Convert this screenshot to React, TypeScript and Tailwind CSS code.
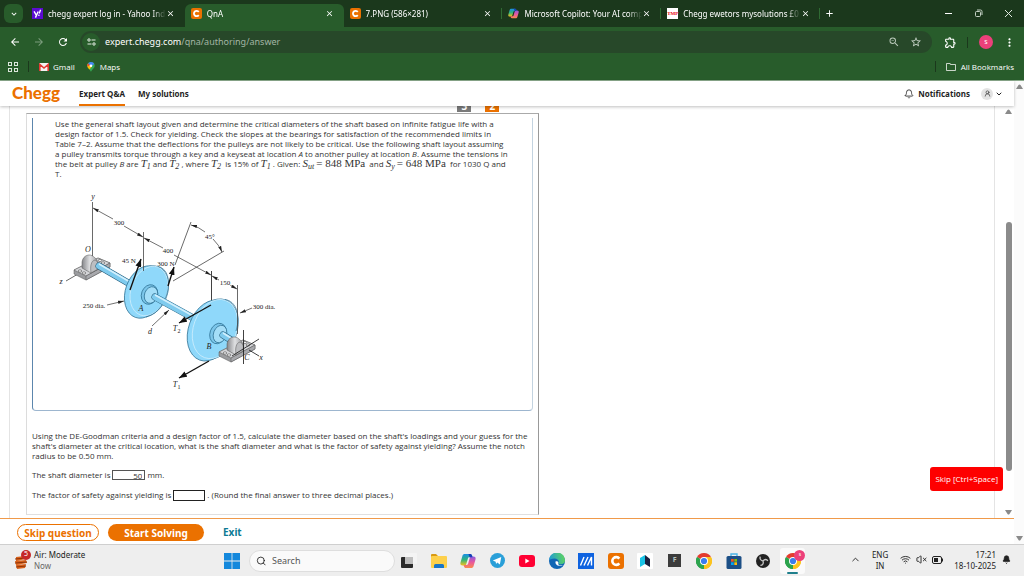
import type { ReactNode } from 'react'
import {
  MdArrowBack,
  MdArrowForward,
  MdClose,
  MdExpandMore,
  MdMoreVert,
  MdOutlineExtension,
  MdOutlineFolder,
  MdRefresh,
  MdStarBorder,
  MdZoomOut,
  MdAdd,
} from 'react-icons/md'
import { Bell, ChevronDown, ChevronUp, Search, UserRound, VolumeX, Wifi } from 'lucide-react'

function CheggIcon({ size }: { size: number }) {
  return (
    <svg width={size} height={size} viewBox="0 0 16 16" className="shrink-0">
      <rect width="16" height="16" rx="3" fill="#eb7100" />
      <path d="M11.3 5.6A3.9 3.9 0 1 0 11.3 10.4" fill="none" stroke="#fff" strokeWidth="2.6" />
    </svg>
  )
}

function CopilotIcon({ size }: { size: number }) {
  return (
    <svg width={size} height={size} viewBox="0 0 16 16" className="shrink-0">
      <defs>
        <linearGradient id="cpA" x1="0" y1="0" x2="0" y2="1">
          <stop offset="0" stopColor="#1b8fe6" />
          <stop offset="0.5" stopColor="#2fb57a" />
          <stop offset="1" stopColor="#f6c01c" />
        </linearGradient>
        <linearGradient id="cpB" x1="0" y1="0" x2="0" y2="1">
          <stop offset="0" stopColor="#8a5be0" />
          <stop offset="0.5" stopColor="#e9589c" />
          <stop offset="1" stopColor="#fb8a4e" />
        </linearGradient>
      </defs>
      <path d="M5 1h5.2c1 0 1.500.6 1.800 1.500l.5 1.700H9.400c-.8 0-1.300.5-1.500 1.200L6.300 11c-.3 1-.9 1.500-1.800 1.500H2.600C.8 12.500 0 11.200.5 9.400L2.400 3C2.800 1.600 3.600 1 5 1z" fill="url(#cpA)" />
      <path d="M11 15H5.800c-1 0-1.500-.6-1.800-1.500l-.4-1.500h3c.8 0 1.300-.5 1.500-1.200L9.700 5c.3-1 .9-1.500 1.800-1.500h1.900c1.800 0 2.600 1.300 2.100 3.100L13.600 13c-.4 1.400-1.200 2-2.600 2z" fill="url(#cpB)" />
      <path d="M8.500 1h1.700c1 0 1.500.6 1.800 1.500l.5 1.700H9.600z" fill="#1b3fb8" />
    </svg>
  )
}

function ChromeIcon({ size }: { size: number }) {
  return (
    <svg width={size} height={size} viewBox="0 0 16 16">
      <path d="M8 8L1.070 4A8 8 0 0 1 14.930 4z" fill="#e33b2e" />
      <path d="M8 8L14.930 4A8 8 0 0 1 8 16z" fill="#fcc31e" />
      <path d="M8 8L8 16A8 8 0 0 1 1.070 4z" fill="#2da44e" />
      <path d="M8 4h6.930A8 8 0 0 1 8 16l3.500-6z" fill="#fcc31e" />
      <path d="M1.070 4l3.500 6L8 12l0 4A8 8 0 0 1 1.070 4z" fill="#2da44e" />
      <circle cx="8" cy="8" r="4" fill="#fff" />
      <circle cx="8" cy="8" r="3.100" fill="#3b7ded" />
    </svg>
  )
}

const tabs: { title: string; icon: ReactNode; active?: boolean; divider?: boolean }[] = [
  {
    title: 'chegg expert log in - Yahoo Ind',
    icon: (
      <svg width="11" height="11" viewBox="0 0 16 16" className="shrink-0">
        <rect width="16" height="16" fill="#5b0bd0" />
        <path d="M3 5l3 5M9 5l-4 9M12.500 2.500l-2 5.500" stroke="#fff" strokeWidth="2" fill="none" />
        <circle cx="10" cy="10.600" r="1.200" fill="#fff" />
      </svg>
    ),
  },
  { title: 'QnA', icon: <CheggIcon size={11} />, active: true },
  { title: '7.PNG (586×281)', icon: <CheggIcon size={11} />, divider: true },
  { title: 'Microsoft Copilot: Your AI comp', icon: <CopilotIcon size={11} />, divider: true },
  {
    title: 'Chegg ewetors mysolutions £0',
    icon: (
      <span className="flex h-[11px] w-[11px] shrink-0 items-center justify-center bg-white font-['Liberation_Serif',serif] text-[5px] font-bold text-red-600">
        TMP
      </span>
    ),
    divider: true,
  },
]

function TabStrip() {
  return (
    <div className="flex h-[27px] shrink-0 items-center bg-[#1b381c] text-white">
      <button aria-label="Search tabs" className="ml-1 flex h-[19px] w-[19px] shrink-0 items-center justify-center rounded-md bg-[#285c2b]">
        <MdExpandMore size={10} />
      </button>
      <div className="ml-[3px] flex h-full min-w-0 max-w-[794px] flex-1">
        {tabs.map(tab => (
          <div
            key={tab.title}
            className={`flex min-w-0 flex-1 items-center pl-[6px] ${tab.active ? 'mt-1 rounded-t-md bg-[#285c2b] pb-1' : ''}`}
          >
            {tab.icon}
            <span className="ml-[5px] min-w-0 flex-1 overflow-hidden whitespace-nowrap text-[8px] [mask-image:linear-gradient(to_right,black_88%,transparent)]">
              {tab.title}
            </span>
            <button aria-label={`Close ${tab.title}`} className="mr-[9px] shrink-0">
              <MdClose size={9} />
            </button>
            <span className={`h-[11px] w-px shrink-0 ${tab.divider ? 'bg-[#2f6a33]' : ''}`} />
          </div>
        ))}
      </div>
      <button aria-label="New tab" className="ml-1">
        <MdAdd size={11} />
      </button>
      <div className="ml-auto flex shrink-0 items-center gap-[21px] pr-[11px]">
        <button aria-label="Minimize">
          <svg width="9" height="9" viewBox="0 0 9 9"><path d="M1 4.500h7" stroke="#fff" /></svg>
        </button>
        <button aria-label="Restore">
          <svg width="9" height="9" viewBox="0 0 9 9" fill="none" stroke="#c6d2c6">
            <rect x="1.500" y="2.500" width="5" height="5" rx="1" />
            <path d="M3 1h3.500a1.500 1.500 0 0 1 1.500 1.500V6" />
          </svg>
        </button>
        <button aria-label="Close window">
          <svg width="9" height="9" viewBox="0 0 9 9"><path d="M1 1l7 7M8 1l-7 7" stroke="#dfe8df" /></svg>
        </button>
      </div>
    </div>
  )
}

function Toolbar() {
  return (
    <div className="flex h-[30px] shrink-0 items-center bg-[#285c2b] pl-[9px] pr-2 text-white">
      <button aria-label="Back"><MdArrowBack size={12} /></button>
      <button aria-label="Forward" className="ml-3 text-[#7b9c7c]"><MdArrowForward size={12} /></button>
      <button aria-label="Reload" className="ml-3"><MdRefresh size={12} /></button>
      <div className="ml-[11px] flex h-[22px] flex-1 items-center rounded-full bg-[#274829] px-[2px]">
        <button aria-label="Site information" className="flex h-[18px] w-[18px] items-center justify-center rounded-full bg-[#285c2b]">
          <svg width="9" height="8" viewBox="0 0 9 8" fill="none" stroke="#e6eee6">
            <circle cx="2" cy="2" r="1.200" />
            <path d="M4.500 2H8.500M0.500 6H4.500" />
            <circle cx="7" cy="6" r="1.200" />
          </svg>
        </button>
        <div role="textbox" aria-label="Address" className="ml-[5px] flex-1 text-[9px] leading-3 text-[#a3b5a4]">
          <span className="text-white">expert.chegg.com</span>/qna/authoring/answer
        </div>
        <button aria-label="Zoom" className="text-[#b9c8b9]"><MdZoomOut size={12} /></button>
        <button aria-label="Bookmark this tab" className="ml-[10px] mr-2 text-[#c9d5c9]"><MdStarBorder size={12} /></button>
      </div>
      <button aria-label="Extensions" className="ml-3"><MdOutlineExtension size={13} /></button>
      <span className="ml-[10px] h-[11px] w-px bg-[#1b381c]" />
      <button aria-label="Profile" className="ml-[11px] flex h-[14px] w-[14px] items-center justify-center rounded-full bg-[#ec407a] text-[7px]">
        s
      </button>
      <button aria-label="Menu" className="ml-[10px]"><MdMoreVert size={13} /></button>
    </div>
  )
}

function BookmarksBar() {
  return (
    <div className="flex h-[24px] shrink-0 items-center border-b border-[#8aa98b] bg-[#285c2b] pb-[4px] pl-2 pr-[10px] font-['Open_Sans',sans-serif] text-[8px] leading-3 text-white">
      <button aria-label="Apps">
        <svg width="10" height="10" viewBox="0 0 10 10" fill="none" stroke="#dbe6db">
          <rect x="0.500" y="0.500" width="3" height="3" />
          <rect x="6.500" y="0.500" width="3" height="3" />
          <rect x="0.500" y="6.500" width="3" height="3" />
          <rect x="6.500" y="6.500" width="3" height="3" />
        </svg>
      </button>
      <span className="ml-[10px] h-[11px] w-px bg-[#1b381c]" />
      <a href="#gmail" className="ml-[10px] flex items-center gap-1">
        <svg width="10" height="8" viewBox="0 0 10 8">
          <rect width="10" height="8" rx="1" fill="#f3f3f3" />
          <path d="M0.800 8V1.500L5 5L9.200 1.500V8" fill="none" stroke="#e23a32" strokeWidth="1.600" />
        </svg>
        Gmail
      </a>
      <a href="#maps" className="ml-3 flex items-center gap-[5px]">
        <svg width="8" height="10" viewBox="0 0 8 10">
          <path d="M4 10C3.600 7.500 0.300 6.500 0.300 3.700A3.700 3.700 0 0 1 7.700 3.700C7.700 6.500 4.400 7.500 4 10z" fill="#34a853" />
          <path d="M0.900 5.700A3.700 3.700 0 0 1 1.200 1.200L5 4.500L2.500 7.600z" fill="#fbbc04" />
          <path d="M1.200 1.200L3.200 3L0.400 4.500A3.700 3.700 0 0 1 1.200 1.200z" fill="#ea4335" />
          <path d="M1.200 1.200A3.700 3.700 0 0 1 7.200 1.900L4 4.500z" fill="#4285f4" />
          <circle cx="4" cy="3.700" r="1.300" fill="#fff" />
        </svg>
        Maps
      </a>
      <span className="ml-auto h-[11px] w-px bg-[#1b381c]" />
      <button className="ml-[9px] flex items-center gap-1">
        <MdOutlineFolder size={12} className="text-[#c9d5c9]" />
        All Bookmarks
      </button>
    </div>
  )
}

function SiteHeader() {
  return (
    <header className="relative z-10 flex h-[25px] shrink-0 items-stretch bg-white pl-3 pr-[11px] text-[8px] font-bold text-[#1f1f1f] shadow-[0_1px_3px_rgba(0,0,0,0.25)]">
      <a href="#home" className="font-[Lato,sans-serif] text-[17px] font-black leading-6 text-[#eb7100]">
        Chegg
      </a>
      <nav className="ml-[19px] flex gap-[13px]">
        <a href="#qna" className="flex items-center border-b-2 border-[#eb7100] pt-[2px]">Expert Q&amp;A</a>
        <a href="#solutions" className="flex items-center">My solutions</a>
      </nav>
      <button className="ml-auto flex items-center gap-1">
        <Bell size={10} strokeWidth={2} />
        Notifications
      </button>
      <button aria-label="Account" className="ml-[11px] flex items-center gap-[2px]">
        <span className="flex h-3 w-3 items-center justify-center rounded-full bg-[#e3e3e3]">
          <UserRound size={7} />
        </span>
        <ChevronDown size={8} strokeWidth={3} />
      </button>
    </header>
  )
}

function Bearing() {
  return (
    <g stroke="#555" strokeWidth="0.500">
      <path d="M0 11L0 15L12 21L36 8L36 4L24 -1L20 1z" fill="#9b9c9f" />
      <path d="M0 11L12 17L36 4L24 -1z" fill="#d4d5d8" />
      <path d="M12 17L12 21L36 8L36 4z" fill="#a8a9ad" />
      <path d="M8 9L8 3C9 -4 16 -6 20 -2C23 0 24 3 24 7L24 10L17 14z" fill="url(#steel)" />
      <path d="M17 14C16 7 17 2 21 1C24 2 25 6 24 10z" fill="#bdbec1" />
      <g fill="#f0f0f0" stroke="#333">
        <ellipse cx="6" cy="12" rx="1.700" ry="1.200" />
        <ellipse cx="10" cy="14" rx="1.700" ry="1.200" />
        <ellipse cx="26" cy="1.500" rx="1.700" ry="1.200" />
        <ellipse cx="29" cy="4" rx="1.700" ry="1.200" />
      </g>
    </g>
  )
}

function ShaftFigure() {
  return (
    <svg width="225" height="205" viewBox="55 190 225 205" role="img" aria-label="Shaft with two pulleys">
      <defs>
        <marker id="dim" viewBox="0 0 6 4" refX="6" refY="2" markerWidth="6" markerHeight="4" markerUnits="userSpaceOnUse" orient="auto-start-reverse">
          <path d="M0 0.400L6 2L0 3.600z" fill="#222" />
        </marker>
        <marker id="force" viewBox="0 0 8 6" refX="8" refY="3" markerWidth="8" markerHeight="6" markerUnits="userSpaceOnUse" orient="auto">
          <path d="M0 0L8 3L0 6z" fill="#111" />
        </marker>
        <linearGradient id="steel" x1="0" y1="0" x2="1" y2="0">
          <stop offset="0" stopColor="#86878b" />
          <stop offset="0.500" stopColor="#e0e1e3" />
          <stop offset="1" stopColor="#98999d" />
        </linearGradient>
      </defs>

      {/* axes and extension lines */}
      <g stroke="#444" strokeWidth="0.800" fill="none">
        <path d="M92.500 203V258M66 282L78 275" />
        <path d="M191 223L175 266M224 252L173 282" />
        <path d="M211.500 272V305" stroke="#111" />
      </g>

      {/* left bearing, shaft, pulley A */}
      <g transform="translate(74 260)"><Bearing /></g>
      <path d="M99 267L130 285" stroke="#245a78" strokeWidth="7" strokeLinecap="round" />
      <path d="M99 267L130 285" stroke="#7fcbee" strokeWidth="6" strokeLinecap="round" />
      <path d="M99 265L130 283" stroke="#d3f0fd" strokeWidth="1.500" />
      <g stroke="#2a6d90" strokeWidth="0.700">
        <ellipse cx="149" cy="292" rx="18.500" ry="26" transform="rotate(20 149 292)" fill="#8fd8fa" />
        <ellipse cx="144.500" cy="293" rx="19" ry="27" transform="rotate(20 144.500 293)" fill="#8fd8fa" />
        <ellipse cx="149" cy="292" rx="18" ry="25.500" transform="rotate(20 149 292)" fill="#8fd8fa" stroke="#d3f0fd" />
        <path d="M158 267.500C167 269 171 281 167 295C163 308 155 316 146 318" fill="none" />
        <ellipse cx="149.500" cy="295.500" rx="8" ry="10" transform="rotate(20 149.500 295.500)" fill="#7cc6ea" />
        <ellipse cx="151" cy="296" rx="6.500" ry="8.500" transform="rotate(20 151 296)" fill="#a4def8" />
      </g>
      <path d="M155 298L206 326" stroke="#245a78" strokeWidth="7" strokeLinecap="round" />
      <path d="M155 298L206 326" stroke="#7fcbee" strokeWidth="6" strokeLinecap="round" />
      <path d="M155 296L206 324" stroke="#d3f0fd" strokeWidth="1.500" />

      {/* pulley B and right bearing */}
      <g stroke="#2a6d90" strokeWidth="0.700">
        <ellipse cx="215" cy="330" rx="22" ry="31" transform="rotate(20 215 330)" fill="#8fd8fa" />
        <ellipse cx="210.500" cy="331.500" rx="22" ry="31.500" transform="rotate(20 210.500 331.500)" fill="#8fd8fa" />
        <ellipse cx="215" cy="330" rx="21.500" ry="30.500" transform="rotate(20 215 330)" fill="#8fd8fa" stroke="#d3f0fd" />
        <path d="M225 300.500C236 302 241 316 236 332" fill="none" />
        <ellipse cx="218" cy="334.500" rx="8" ry="10.500" transform="rotate(20 218 334.500)" fill="#7cc6ea" />
        <ellipse cx="220" cy="335" rx="6.500" ry="9" transform="rotate(20 220 335)" fill="#a4def8" />
      </g>
      <path d="M223 336L231 341" stroke="#245a78" strokeWidth="7" strokeLinecap="round" />
      <path d="M223 336L231 341" stroke="#7fcbee" strokeWidth="6" strokeLinecap="round" />
      <path d="M223 334L231 339" stroke="#d3f0fd" strokeWidth="1.500" />
      <g transform="translate(219 342)"><Bearing /></g>

      <g stroke="#444" strokeWidth="0.800" fill="none">
        <path d="M143.500 233V272M237.500 286V335" />
        <path d="M243.500 331V365M232 357L259 340M249 351L259 357" stroke="#111" />
      </g>

      {/* dimensions */}
      <g stroke="#333" strokeWidth="0.700" fill="none">
        <path d="M113 220L93 209" markerEnd="url(#dim)" />
        <path d="M124 227L143 238" markerEnd="url(#dim)" />
        <path d="M163 249L144 239" markerEnd="url(#dim)" />
        <path d="M174 256L211 276" markerEnd="url(#dim)" />
        <path d="M219 281L212 277" markerEnd="url(#dim)" />
        <path d="M230 286L237 290" markerEnd="url(#dim)" />
        <path d="M205 233Q199 228 191 226" markerEnd="url(#dim)" />
        <path d="M213 240Q219 246 222 253" markerEnd="url(#dim)" />
        <path d="M107 306L124 302" markerEnd="url(#dim)" />
        <path d="M152 327L169 311" markerEnd="url(#dim)" />
        <path d="M252 309L240 314" markerEnd="url(#dim)" />
      </g>

      {/* forces */}
      <g stroke="#111" strokeWidth="1.400" fill="none">
        <path d="M130 291L141 260" markerEnd="url(#force)" />
        <path d="M168 287L174 268" markerEnd="url(#force)" />
        <path d="M211 306L179 324" markerEnd="url(#force)" />
        <path d="M209 362L179 379" markerEnd="url(#force)" />
      </g>

      <g className="font-['Liberation_Serif',serif] text-[7px]" fill="#222" textAnchor="middle">
        <g stroke="#fff" strokeWidth="2" paintOrder="stroke">
          <text x="119" y="226">300</text>
          <text x="168" y="254">400</text>
          <text x="225" y="286">150</text>
        </g>
        <text x="210" y="240">45°</text>
        <text x="129" y="264">45 N</text>
        <text x="166" y="267">300 N</text>
        <text x="94" y="309">250 dia.</text>
        <text x="264" y="310">300 dia.</text>
        <g fontStyle="italic" className="text-[8px]">
          <text x="93" y="200">y</text>
          <text x="88" y="253">O</text>
          <text x="61" y="285">z</text>
          <text x="141" y="312">A</text>
          <text x="150" y="335">d</text>
          <text x="209" y="350">B</text>
          <text x="247" y="361">C</text>
          <text x="261" y="361">x</text>
          <text x="175" y="332">T</text>
          <text x="175" y="388">T</text>
        </g>
        <text x="179" y="334" className="text-[6px]">2</text>
        <text x="179" y="390" className="text-[6px]">1</text>
      </g>
    </svg>
  )
}

function Sym({ name, sub }: { name: string; sub: string }) {
  return (
    <span className="font-['Liberation_Serif',serif] text-[11px] italic leading-[8px]">
      {name}
      <sub className="text-[8px]">{sub}</sub>
    </span>
  )
}

function Val({ children }: { children: ReactNode }) {
  return <span className="font-['Liberation_Serif',serif] text-[11px] leading-[8px]">{children}</span>
}

function ScrollArrow({ up }: { up?: boolean }) {
  return (
    <svg width="7" height="5" viewBox="0 0 7 5">
      <path d={up ? 'M0 5L2.500 1Q3.500 0 4.500 1L7 5z' : 'M0 0L2.500 4Q3.500 5 4.500 4L7 0z'} fill="#8a8a8a" />
    </svg>
  )
}

function Question() {
  return (
    <main className="relative flex min-h-0 flex-1 pl-[9px]">
      <div className="min-w-0 flex-1 overflow-hidden border-x border-[#e4e4e4] pl-4">
        <div className="flex h-[7px] w-[52%] items-start justify-end gap-[14px] pr-[30px] text-[10px] font-bold text-white">
          <span className="flex h-[6px] w-[14px] items-end justify-center overflow-hidden bg-[#7a7a7a] pb-[2px] leading-[8px]">3</span>
          <span className="flex h-[6px] w-[14px] items-end justify-center overflow-hidden bg-[#eb7100] pb-[2px] leading-[8px]">2</span>
        </div>
        <div className="w-[53%] whitespace-nowrap border border-b-[#e0e0e0] border-l-[#dcdcdc] border-r-[#999] border-t-[#aaa] px-[5px] pb-[14px] pt-1 font-['Open_Sans',sans-serif] text-[8px] leading-[10px] text-[#333]">
          <section className="h-[293px] rounded-b border border-t-0 border-b-[#9db6cf] border-l-[#5c86ad] border-r-[#c3d3e0] pl-[22px] pt-px">
            <p>
              Use the general shaft layout given and determine the critical diameters of the shaft based on infinite fatigue life with a<br />
              design factor of 1.5. Check for yielding. Check the slopes at the bearings for satisfaction of the recommended limits in<br />
              Table 7–2. Assume that the deflections for the pulleys are not likely to be critical. Use the following shaft layout assuming<br />
              a pulley transmits torque through a key and a keyseat at location <i>A</i> to another pulley at location <i>B</i>. Assume the tensions in<br />
              the belt at pulley <i>B</i> are <Sym name="T" sub="1" /> and <Sym name="T" sub="2" /> , where <Sym name="T" sub="2" />{' '}
              &nbsp;is 15% of <Sym name="T" sub="1" /> . Given: <Sym name="S" sub="ut" /> <Val>= 848 MPa</Val> &nbsp;and{' '}
              <Sym name="S" sub="y" /> <Val>= 648 MPa</Val> &nbsp;for 1030 Q and<br />
              T.
            </p>
            <div className="mt-[10px]"><ShaftFigure /></div>
          </section>
          <p className="mt-5">
            Using the DE-Goodman criteria and a design factor of 1.5, calculate the diameter based on the shaft's loadings and your guess for the<br />
            shaft's diameter at the critical location, what is the shaft diameter and what is the factor of safety against yielding? Assume the notch<br />
            radius to be 0.50 mm.
          </p>
          <div className="mt-[9px] flex h-[10px] items-center gap-[2px]">
            <label htmlFor="diameter">The shaft diameter is</label>
            <input id="diameter" defaultValue="50" className="h-[10px] w-[33px] border border-[#555] px-[2px] text-right text-[8px] leading-none" />
            mm.
          </div>
          <div className="mt-[10px] flex h-[10px] items-center gap-[2px]">
            <label htmlFor="safety">The factor of safety against yielding is</label>
            <input id="safety" className="h-[11px] w-8 border border-[#222] px-[2px] text-right text-[8px] leading-none" />
            . (Round the final answer to three decimal places.)
          </div>
        </div>
      </div>
      <div className="flex w-[19px] flex-col items-center bg-white py-[3px]">
        <span className="ml-2"><ScrollArrow up /></span>
        <div className="ml-2 mt-[108px] h-[249px] w-[6px] rounded-full bg-[#8b8b8b]" />
        <span className="ml-2 mt-auto"><ScrollArrow /></span>
      </div>
      <button className="absolute bottom-[27px] right-[11px] h-6 rounded-[3px] bg-[#fe0000] px-[5px] font-['Open_Sans',sans-serif] text-[8px] text-white">
        Skip [Ctrl+Space]
      </button>
    </main>
  )
}

function ActionBar() {
  return (
    <footer className="flex h-[26px] shrink-0 items-center border-t border-[#f09a4a] bg-white pl-[17px] pt-[2px] text-[10px] font-bold">
      <button className="h-[17px] w-[82px] rounded-full border border-[#eb7100] leading-none text-[#eb7100]">Skip question</button>
      <button className="ml-[9px] h-[17px] w-24 rounded-full bg-[#eb7100] leading-none text-white">Start Solving</button>
      <a href="#exit" className="ml-[19px] text-[#0a7a94]">Exit</a>
    </footer>
  )
}

const pinned: { name: string; icon: ReactNode; open?: boolean }[] = [
  {
    name: 'Task view',
    icon: (
      <svg width="16" height="16" viewBox="0 0 16 16">
        <rect x="0" y="4" width="12" height="11" rx="1" fill="#2a2a2a" />
        <rect x="4" y="0" width="12" height="11" rx="1" fill="#f4f4f4" />
        <rect x="4" y="4" width="8" height="7" fill="#bdbdbd" />
      </svg>
    ),
  },
  {
    name: 'File Explorer',
    icon: (
      <svg width="16" height="16" viewBox="0 0 16 16">
        <path d="M0 2a1 1 0 0 1 1-1h4l2 2h8v5H0z" fill="#d99a12" />
        <rect y="3" width="16" height="12" rx="1" fill="#fdd04b" />
        <path d="M3 15v-2.500a1.500 1.500 0 0 1 1.500-1.500h7a1.500 1.500 0 0 1 1.500 1.500V15z" fill="#1976c8" />
      </svg>
    ),
  },
  { name: 'Copilot', icon: <CopilotIcon size={16} /> },
  {
    name: 'Telegram',
    icon: (
      <svg width="15" height="15" viewBox="0 0 16 16">
        <circle cx="8" cy="8" r="8" fill="#2a9fd8" />
        <path d="M3 8l9-3.800-1.500 8-2.700-2-1.400 1.500-.3-2.500z" fill="#fff" />
      </svg>
    ),
  },
  {
    name: 'YouTube',
    icon: (
      <svg width="16" height="12" viewBox="0 0 16 12">
        <rect width="16" height="12" rx="3" fill="#ff0033" />
        <path d="M6.300 3.500v5l4.200-2.500z" fill="#fff" />
      </svg>
    ),
  },
  {
    name: 'Edge',
    icon: (
      <svg width="16" height="16" viewBox="0 0 16 16">
        <defs>
          <linearGradient id="edge" x1="0" y1="0.500" x2="1" y2="0.300">
            <stop offset="0" stopColor="#1f9ad6" />
            <stop offset="1" stopColor="#5fd65b" />
          </linearGradient>
        </defs>
        <circle cx="8" cy="8" r="8" fill="#1166b5" />
        <path d="M0 7.500A8 8 0 0 1 16 7.500c0 2.500-2 3.800-4 3.800-1.800 0-2.800-.6-2.300-1.600C10.500 7.500 8 5.500 5.500 5.500 2.500 5.500.5 6.500 0 7.500z" fill="url(#edge)" />
        <path d="M6.500 8.500c-.5 3 2.500 5.500 7.500 3.900C11 13 8.800 12 9.300 10c.5-1-.5-2.500-2.800-1.500z" fill="#fff" />
      </svg>
    ),
  },
  {
    name: 'MyAccess',
    icon: (
      <svg width="16" height="16" viewBox="0 0 16 16">
        <rect width="16" height="16" fill="#0f63e0" />
        <path d="M2.500 12.500L6 4M6 12.500L10 4M9.500 12.500l4-8.500v8.500" stroke="#fff" strokeWidth="1.400" fill="none" />
      </svg>
    ),
  },
  { name: 'Chegg', icon: <CheggIcon size={16} /> },
  {
    name: 'Reader',
    icon: (
      <svg width="16" height="16" viewBox="0 0 16 16">
        <rect width="16" height="16" rx="1" fill="#fff" />
        <path d="M3 5l5-3v9l-5 3z" fill="#19c3e6" />
        <path d="M8 2l5 4v8l-5-3z" fill="#1a2140" />
      </svg>
    ),
  },
  {
    name: 'F',
    icon: <span className="flex h-[13px] w-[13px] items-center justify-center bg-[#3c3c3c] text-[7px] font-bold text-[#b8c4c0]">F</span>,
  },
  { name: 'Chrome', icon: <ChromeIcon size={16} /> },
  {
    name: 'Microsoft Store',
    icon: (
      <svg width="16" height="16" viewBox="0 0 16 16">
        <path d="M5 4V1h6v3" stroke="#4ab4e8" strokeWidth="1.400" fill="none" />
        <rect x="0.500" y="3" width="15" height="13" rx="1.500" fill="#1c4f86" />
        <path d="M5 6h2.700v2.700H5z" fill="#f35325" />
        <path d="M8.300 6H11v2.700H8.300z" fill="#81bc06" />
        <path d="M5 9.300h2.700V12H5z" fill="#05a6f0" />
        <path d="M8.300 9.300H11V12H8.300z" fill="#ffba08" />
      </svg>
    ),
  },
  {
    name: 'OBS Studio',
    icon: (
      <svg width="14" height="14" viewBox="0 0 16 16">
        <circle cx="8" cy="8" r="8" fill="#222" />
        <path d="M8 8C5 7.500 4 5 5 3M8 8c2-2.500 4.500-2 5.500 0M8 8c1 3-.5 5-3 5" stroke="#c4c4c4" strokeWidth="1.500" fill="none" />
      </svg>
    ),
  },
  { name: 'Chrome (s)', icon: <ChromeIcon size={16} />, open: true },
]

function Taskbar() {
  return (
    <div className="flex h-8 shrink-0 items-center border-t border-[#cfcfcf] bg-[#eeeeee] text-[8px] text-[#222]">
      <div className="flex flex-1 items-center gap-[2px] pb-[2px] pl-[14px]">
        <span className="relative pt-1">
          <svg width="18" height="16" viewBox="0 0 18 16">
            <path d="M2 3l9-1 1 3-10 2zM1 7l11-1 1 3-11 2zM2 11l10-1-1 4-8 1z" fill="#d9601a" />
            <path d="M1 5l11-1M1 9l12-1M2 13l10-1" stroke="#8f3508" />
          </svg>
          <span className="absolute left-[7px] top-0 flex h-[10px] w-[10px] items-center justify-center rounded-full bg-[#c62828] text-[7px] text-white">5</span>
        </span>
        <div className="leading-[11px]">
          Air: Moderate
          <div className="text-[#666]">Now</div>
        </div>
      </div>
      <div className="flex h-full items-center">
        <button aria-label="Start" className="ml-1 mr-[9px]">
          <svg width="16" height="16" viewBox="0 0 16 16" fill="#1488dc">
            <path d="M0 0h7.600v7.600H0zM8.400 0H16v7.600H8.400zM0 8.400h7.600V16H0zM8.400 8.400H16V16H8.400z" />
          </svg>
        </button>
        <label className="flex h-[22px] w-[146px] items-center gap-[6px] rounded-full border border-[#dedede] bg-[#fafafa] px-[6px]">
          <Search size={12} color="#222" />
          <input aria-label="Search" placeholder="Search" className="w-full min-w-0 bg-transparent text-[9px] outline-none placeholder:text-[#555]" />
        </label>
        <div className="ml-[2px] flex h-full w-[409px] items-center justify-between">
          {pinned.map(app => (
            <button
              key={app.name}
              aria-label={app.name}
              className={`relative flex h-[26px] w-[25px] items-center justify-center ${app.open ? 'rounded-[3px] bg-[#fafafa]' : ''}`}
            >
              {app.icon}
              {app.open && (
                <>
                  <span className="absolute right-0 top-[2px] flex h-[11px] w-[11px] items-center justify-center rounded-full bg-[#ec407a] text-[5px] text-white">s</span>
                  <span className="absolute bottom-0 left-[7px] h-[2px] w-[11px] rounded-full bg-[#1f7f8c]" />
                </>
              )}
            </button>
          ))}
        </div>
      </div>
      <div className="flex flex-1 items-center justify-end pb-[2px] pr-[13px] leading-[11px]">
        <ChevronUp size={11} />
        <div className="ml-[11px] text-center">ENG<br />IN</div>
        <Wifi size={11} className="ml-3" />
        <VolumeX size={11} className="ml-[5px]" />
        <svg width="12" height="8" viewBox="0 0 12 8" className="ml-[5px]">
          <rect x="0.500" y="0.500" width="9" height="7" rx="1.500" fill="none" stroke="#222" />
          <rect x="2" y="2" width="4" height="4" fill="#222" />
          <path d="M10.500 2.500v3" stroke="#222" />
        </svg>
        <div className="ml-[10px] text-right">17:21<br />18-10-2025</div>
        <Bell size={9} fill="#222" className="ml-[6px]" />
      </div>
    </div>
  )
}

export default function App() {
  return (
    <div className="flex h-screen flex-col overflow-hidden bg-white font-['Noto_Sans',sans-serif]">
      <TabStrip />
      <Toolbar />
      <BookmarksBar />
      <div className="flex min-h-0 flex-1">
        <div className="flex min-w-0 flex-1 flex-col">
          <SiteHeader />
          <Question />
          <ActionBar />
        </div>
        <div className="flex w-[10px] shrink-0 flex-col items-center justify-between bg-[#fbfbfb] py-[3px]">
          <ScrollArrow up />
          <ScrollArrow />
        </div>
      </div>
      <Taskbar />
    </div>
  )
}
